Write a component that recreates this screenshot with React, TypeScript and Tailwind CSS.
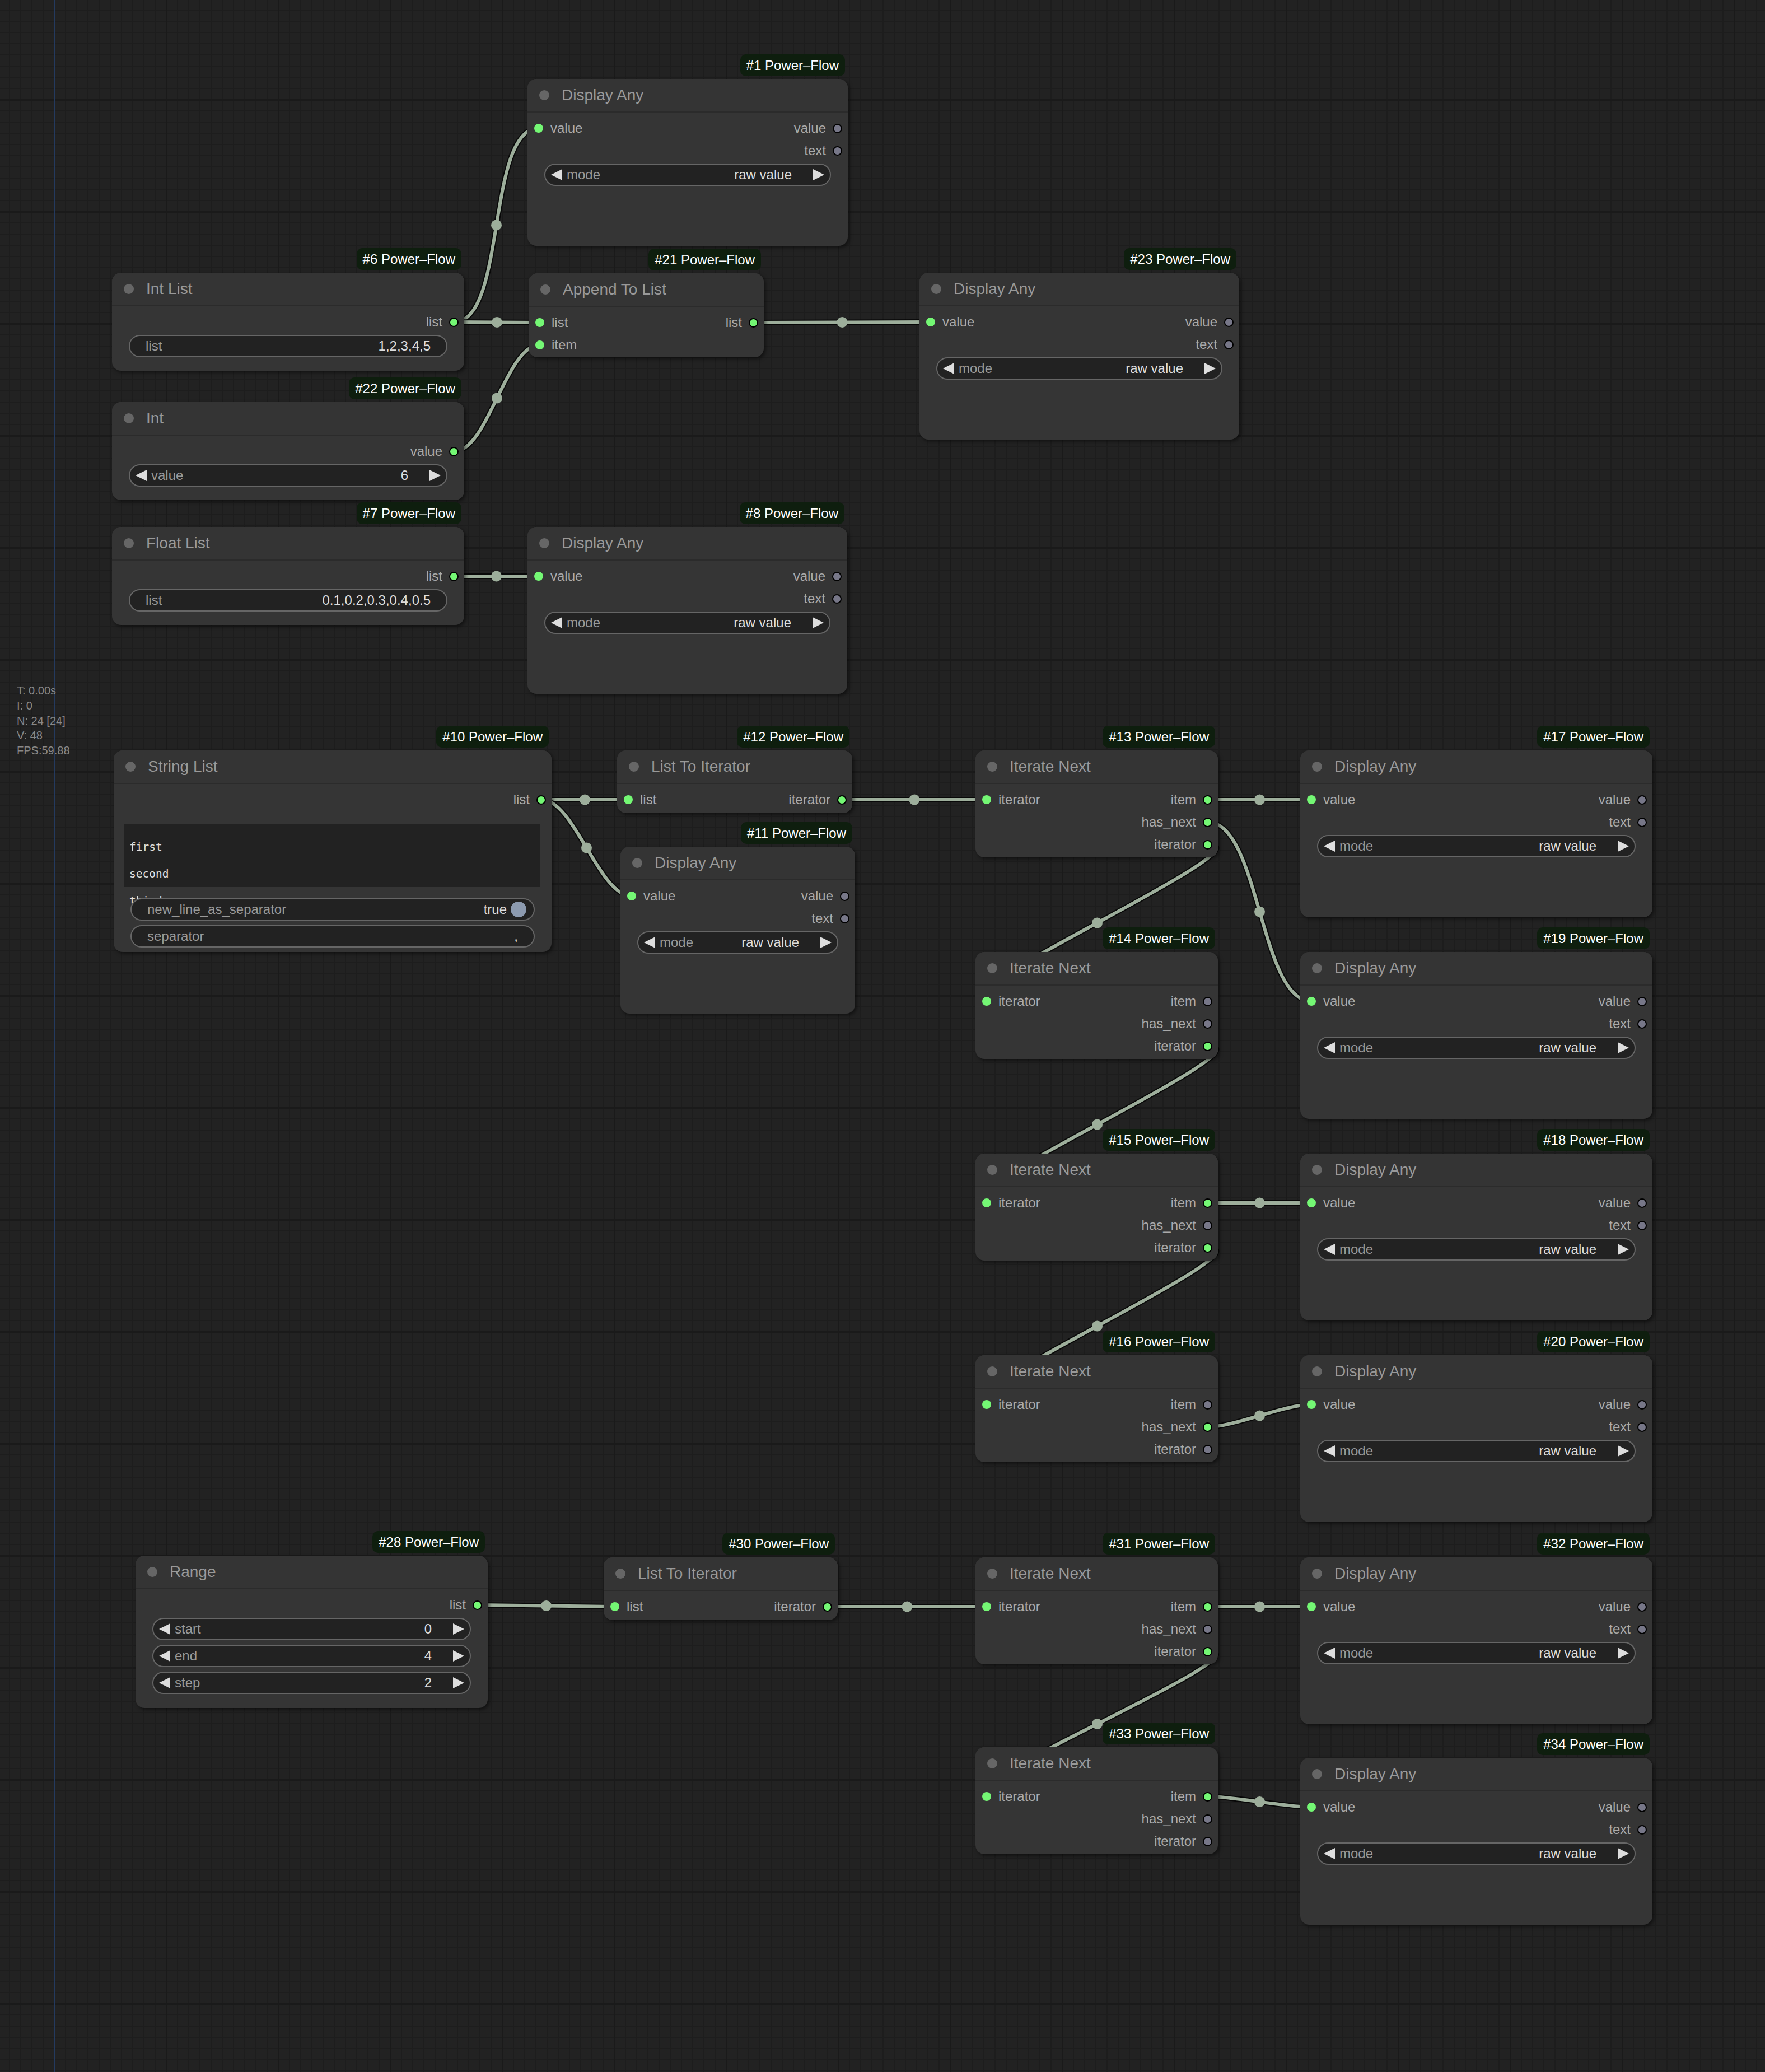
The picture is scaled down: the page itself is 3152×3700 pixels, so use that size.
import React from "react";

type Slot = [string, boolean];
type Widget = { kind: "combo" | "text" | "toggle"; label: string; value: string };

type GraphNode = {
  id: number;
  title: string;
  x: number;
  y: number;
  w: number;
  h: number;
  inputs: Slot[];
  outputs: Slot[];
  widgets?: Widget[];
  lines?: string[];
};

const display = (id: number, x: number, y: number, w: number): GraphNode => ({
  id,
  title: "Display Any",
  x,
  y,
  w,
  h: 298,
  inputs: [["value", true]],
  outputs: [
    ["value", false],
    ["text", false],
  ],
  widgets: [{ kind: "combo", label: "mode", value: "raw value" }],
});

const iterate = (id: number, y: number, item: boolean, hasNext: boolean, iter: boolean): GraphNode => ({
  id,
  title: "Iterate Next",
  x: 1742,
  y,
  w: 433,
  h: 191,
  inputs: [["iterator", true]],
  outputs: [
    ["item", item],
    ["has_next", hasNext],
    ["iterator", iter],
  ],
});

const nodes: GraphNode[] = [
  display(1, 942, 141, 572),
  {
    id: 6,
    title: "Int List",
    x: 200,
    y: 487,
    w: 629,
    h: 175,
    inputs: [],
    outputs: [["list", true]],
    widgets: [{ kind: "text", label: "list", value: "1,2,3,4,5" }],
  },
  {
    id: 22,
    title: "Int",
    x: 200,
    y: 718,
    w: 629,
    h: 175,
    inputs: [],
    outputs: [["value", true]],
    widgets: [{ kind: "combo", label: "value", value: "6" }],
  },
  {
    id: 21,
    title: "Append To List",
    x: 944,
    y: 488,
    w: 420,
    h: 150,
    inputs: [
      ["list", true],
      ["item", true],
    ],
    outputs: [["list", true]],
  },
  display(23, 1642, 487, 571),
  {
    id: 7,
    title: "Float List",
    x: 200,
    y: 941,
    w: 629,
    h: 175,
    inputs: [],
    outputs: [["list", true]],
    widgets: [{ kind: "text", label: "list", value: "0.1,0.2,0.3,0.4,0.5" }],
  },
  display(8, 942, 941, 571),
  {
    id: 10,
    title: "String List",
    x: 203,
    y: 1340,
    w: 782,
    h: 360,
    inputs: [],
    outputs: [["list", true]],
    lines: ["first", "second", "third"],
    widgets: [
      { kind: "toggle", label: "new_line_as_separator", value: "true" },
      { kind: "text", label: "separator", value: "," },
    ],
  },
  {
    id: 12,
    title: "List To Iterator",
    x: 1102,
    y: 1340,
    w: 420,
    h: 112,
    inputs: [["list", true]],
    outputs: [["iterator", true]],
  },
  display(11, 1108, 1512, 419),
  iterate(13, 1340, true, true, true),
  display(17, 2322, 1340, 629),
  iterate(14, 1700, false, false, true),
  display(19, 2322, 1700, 629),
  iterate(15, 2060, true, false, true),
  display(18, 2322, 2060, 629),
  iterate(16, 2420, false, true, false),
  display(20, 2322, 2420, 629),
  {
    id: 28,
    title: "Range",
    x: 242,
    y: 2778,
    w: 629,
    h: 272,
    inputs: [],
    outputs: [["list", true]],
    widgets: [
      { kind: "combo", label: "start", value: "0" },
      { kind: "combo", label: "end", value: "4" },
      { kind: "combo", label: "step", value: "2" },
    ],
  },
  {
    id: 30,
    title: "List To Iterator",
    x: 1078,
    y: 2781,
    w: 418,
    h: 112,
    inputs: [["list", true]],
    outputs: [["iterator", true]],
  },
  iterate(31, 2781, true, false, true),
  display(32, 2322, 2781, 629),
  iterate(33, 3120, true, false, false),
  display(34, 2322, 3139, 629),
];

// [from node, output slot, to node, input slot]
const links: [number, number, number, number][] = [
  [6, 0, 1, 0],
  [6, 0, 21, 0],
  [22, 0, 21, 1],
  [21, 0, 23, 0],
  [7, 0, 8, 0],
  [10, 0, 12, 0],
  [10, 0, 11, 0],
  [12, 0, 13, 0],
  [13, 0, 17, 0],
  [13, 1, 19, 0],
  [13, 2, 14, 0],
  [14, 2, 15, 0],
  [15, 0, 18, 0],
  [15, 2, 16, 0],
  [16, 1, 20, 0],
  [28, 0, 30, 0],
  [30, 0, 31, 0],
  [31, 0, 32, 0],
  [31, 2, 33, 0],
  [33, 0, 34, 0],
];

const byId = (id: number) => nodes.find((n) => n.id === id)!;

function linkGeometry([a, o, b, i]: [number, number, number, number]) {
  const from = byId(a);
  const to = byId(b);
  const x1 = from.x + from.w - 18;
  const y1 = from.y + 88 + o * 40;
  const x2 = to.x + 20;
  const y2 = to.y + 88 + i * 40;
  const c = Math.hypot(x2 - x1, y2 - y1) * 0.25;
  const d = `M${x1} ${y1} C${x1 + c} ${y1} ${x2 - c} ${y2} ${x2} ${y2}`;
  const mx = (x1 + 3 * (x1 + c) + 3 * (x2 - c) + x2) / 8;
  const my = (y1 + 3 * y1 + 3 * y2 + y2) / 8;
  return { d, mx, my };
}

const Arrow = ({ right }: { right?: boolean }) => (
  <svg width="20" height="20" viewBox="0 0 20 20" className="shrink-0">
    <polygon points={right ? "0,0 20,10 0,20" : "20,0 0,10 20,20"} fill="#dddddd" />
  </svg>
);

function WidgetRow({ w }: { w: Widget }) {
  if (w.kind === "combo") {
    return (
      <div className="h-[40px] rounded-full border-2 border-[#666] bg-[#222] flex items-center px-[10px] text-[24px] whitespace-nowrap">
        <Arrow />
        <span className="ml-[8px] text-[#999]">{w.label}</span>
        <span className="flex-1" />
        <span className="text-[#ddd]">{w.value}</span>
        <span className="ml-[38px] flex">
          <Arrow right />
        </span>
      </div>
    );
  }
  if (w.kind === "toggle") {
    return (
      <div className="h-[40px] rounded-full border-2 border-[#666] bg-[#222] flex items-center pl-[28px] pr-[13px] text-[24px] whitespace-nowrap">
        <span className="text-[#999]">{w.label}</span>
        <span className="flex-1" />
        <span className="text-[#ddd]">{w.value}</span>
        <span className="ml-[7px] w-[28px] h-[28px] rounded-full bg-[#8c9aaf]" />
      </div>
    );
  }
  return (
    <div className="h-[40px] rounded-full border-2 border-[#666] bg-[#222] flex items-center px-[28px] text-[24px] whitespace-nowrap">
      <span className="text-[#999]">{w.label}</span>
      <span className="flex-1" />
      <span className="text-[#ddd]">{w.value}</span>
    </div>
  );
}

function NodeBox({ n }: { n: GraphNode }) {
  const rows = Math.max(n.inputs.length, n.outputs.length);
  return (
    <div className="absolute" style={{ left: n.x, top: n.y, width: n.w, height: n.h }}>
      <div className="absolute right-[5px] bottom-full mb-[5px] h-[39px] px-[11px] flex items-center rounded-[10px] bg-[#0e1e0e] text-white text-[24px] whitespace-nowrap">
        #{n.id} Power–Flow
      </div>
      <div className="h-full rounded-[16px] bg-[#353535] shadow-[3px_3px_6px_rgba(0,0,0,0.5)] flex flex-col">
        <div className="h-[60px] shrink-0 flex items-center border-b-2 border-[#2b2b2b] rounded-t-[16px] bg-[#343434]">
          <span className="ml-[21px] w-[18px] h-[18px] rounded-full bg-[#666]" />
          <span className="ml-[22px] text-[28px] text-[#999] whitespace-nowrap">{n.title}</span>
        </div>
        <div className="pt-[8px] flex flex-col">
          {Array.from({ length: rows }).map((_, r) => {
            const inp = n.inputs[r];
            const out = n.outputs[r];
            return (
              <div key={r} className="h-[40px] flex items-center text-[24px] text-[#aaa]">
                {inp && (
                  <>
                    <span
                      className={`ml-[12px] w-[16px] h-[16px] rounded-full ${inp[1] ? "bg-[#74f774]" : "bg-[#777788]"}`}
                    />
                    <span className="ml-[13px]">{inp[0]}</span>
                  </>
                )}
                <span className="flex-1" />
                {out && (
                  <>
                    <span>{out[0]}</span>
                    <span
                      className={`ml-[12px] mr-[10px] w-[17px] h-[17px] rounded-full border-2 border-black ${out[1] ? "bg-[#74f774]" : "bg-[#777788]"}`}
                    />
                  </>
                )}
              </div>
            );
          })}
        </div>
        {n.lines && (
          <div className="mt-[24px] ml-[19px] mr-[21px] h-[112px] bg-[#222] pt-[17px] pl-[9px] text-[19.5px] leading-[48px] text-[#e0e0e0] [font-family:DejaVu_Sans_Mono,monospace]">
            {n.lines.map((l) => (
              <div key={l}>{l}</div>
            ))}
          </div>
        )}
        {n.widgets && (
          <div className={`relative px-[30px] flex flex-col gap-[8px] ${n.lines ? "mt-[20px]" : "mt-[3px]"}`}>
            {n.widgets.map((w) => (
              <WidgetRow key={w.label} w={w} />
            ))}
          </div>
        )}
      </div>
    </div>
  );
}

export default function App() {
  return (
    <div className="relative w-[3152px] h-[3700px] overflow-hidden bg-[#222222] [font-family:Liberation_Sans,Arial,sans-serif] [background-image:linear-gradient(to_right,#1a1a1a_3px,transparent_3px),linear-gradient(to_bottom,#1a1a1a_3px,transparent_3px),linear-gradient(to_right,#1d1d1d_2px,transparent_2px),linear-gradient(to_bottom,#1d1d1d_2px,transparent_2px)] [background-size:200px_200px,200px_200px,20px_20px,20px_20px] [background-position:96px_177px,96px_177px,16px_17px,16px_17px]">
      <div className="absolute left-[96px] top-0 w-[3px] h-full bg-[#243a5f]" />

      <div className="absolute left-[30px] top-[1220px] text-[20px] leading-[26.75px] text-[#888]">
        <div>T: 0.00s</div>
        <div>I: 0</div>
        <div>N: 24 [24]</div>
        <div>V: 48</div>
        <div>FPS:59.88</div>
      </div>

      <svg className="absolute left-0 top-0" width="3152" height="3700">
        {links.map((l, k) => {
          const g = linkGeometry(l);
          return (
            <g key={k}>
              <path d={g.d} fill="none" stroke="#000000" strokeOpacity="0.75" strokeWidth="10" />
              <path d={g.d} fill="none" stroke="#9dae9b" strokeWidth="6" />
              <circle cx={g.mx} cy={g.my} r="9.5" fill="#9dae9b" />
            </g>
          );
        })}
      </svg>

      {nodes.map((n) => (
        <NodeBox key={n.id} n={n} />
      ))}
    </div>
  );
}
